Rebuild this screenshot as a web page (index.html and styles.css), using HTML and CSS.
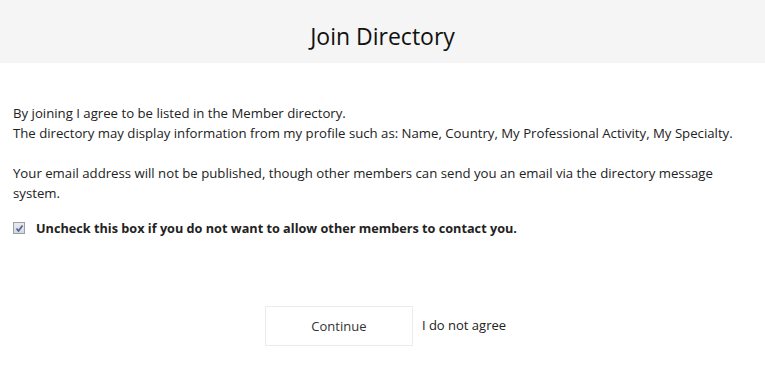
FILE: index.html
```html
<!DOCTYPE html>
<html lang="en">
<head>
    <meta charset="UTF-8">
    <meta name="viewport" content="width=device-width, initial-scale=1.0">
    <title>Join Directory</title>
    <link rel="stylesheet" href="styles.css">
</head>
<body>
    <div class="header">Join Directory</div>
    <div class="content">
        <p>By joining I agree to be listed in the Member directory.<br>
        The directory may display information from my profile such as: Name, Country, My Professional Activity, My Specialty.</p>
        <p class="notice">Your email address will not be published, though other members can send you an email via the directory message system.</p>
        <label class="contact">
            <span class="check">
                <svg width="9" height="9" viewBox="0 0 9 9"><path d="M1.5 4.5 L3.5 7 L7.5 1.5" fill="none" stroke="#4d5f93" stroke-width="1.6"/></svg>
            </span>
            Uncheck this box if you do not want to allow other members to contact you.
        </label>
    </div>
    <div class="actions">
        <button class="continue">Continue</button>
        <span class="decline">I do not agree</span>
    </div>
</body>
</html>
```

FILE: styles.css
```css
body {
    margin: 0;
    font-family: 'Open Sans', sans-serif;
    color: #222;
    background: #fff;
}
.header {
    height: 63px;
    background-color: #f5f5f5;
    display: flex;
    align-items: center;
    justify-content: center;
    font-size: 23px;
    color: #111;
    padding-top: 9px;
    box-sizing: border-box;
}
.content {
    padding: 40px 13px 0 13px;
    font-size: 13.2px;
    line-height: 20px;
}
.content p {
    margin: 0 0 20px 0;
}
.content p.notice {
    margin-bottom: 15px;
}
.contact {
    display: flex;
    align-items: center;
    font-weight: bold;
    font-size: 12.7px;
}
.check {
    width: 10px;
    height: 10px;
    border: 1px solid #9aa0ab;
    background: linear-gradient(#e8eaee, #d4d8df);
    margin-right: 11px;
    display: flex;
    align-items: center;
    justify-content: center;
}
.actions {
    display: flex;
    justify-content: center;
    align-items: center;
    gap: 9px;
    margin-top: 68px;
    padding-left: 6px;
}
.continue {
    width: 148px;
    height: 40px;
    background: #fff;
    border: 1px solid #ececec;
    font-family: 'Open Sans', sans-serif;
    font-size: 13px;
    color: #333;
    cursor: pointer;
}
.decline {
    font-size: 13px;
    color: #222;
    margin-top: -2px;
}
```
